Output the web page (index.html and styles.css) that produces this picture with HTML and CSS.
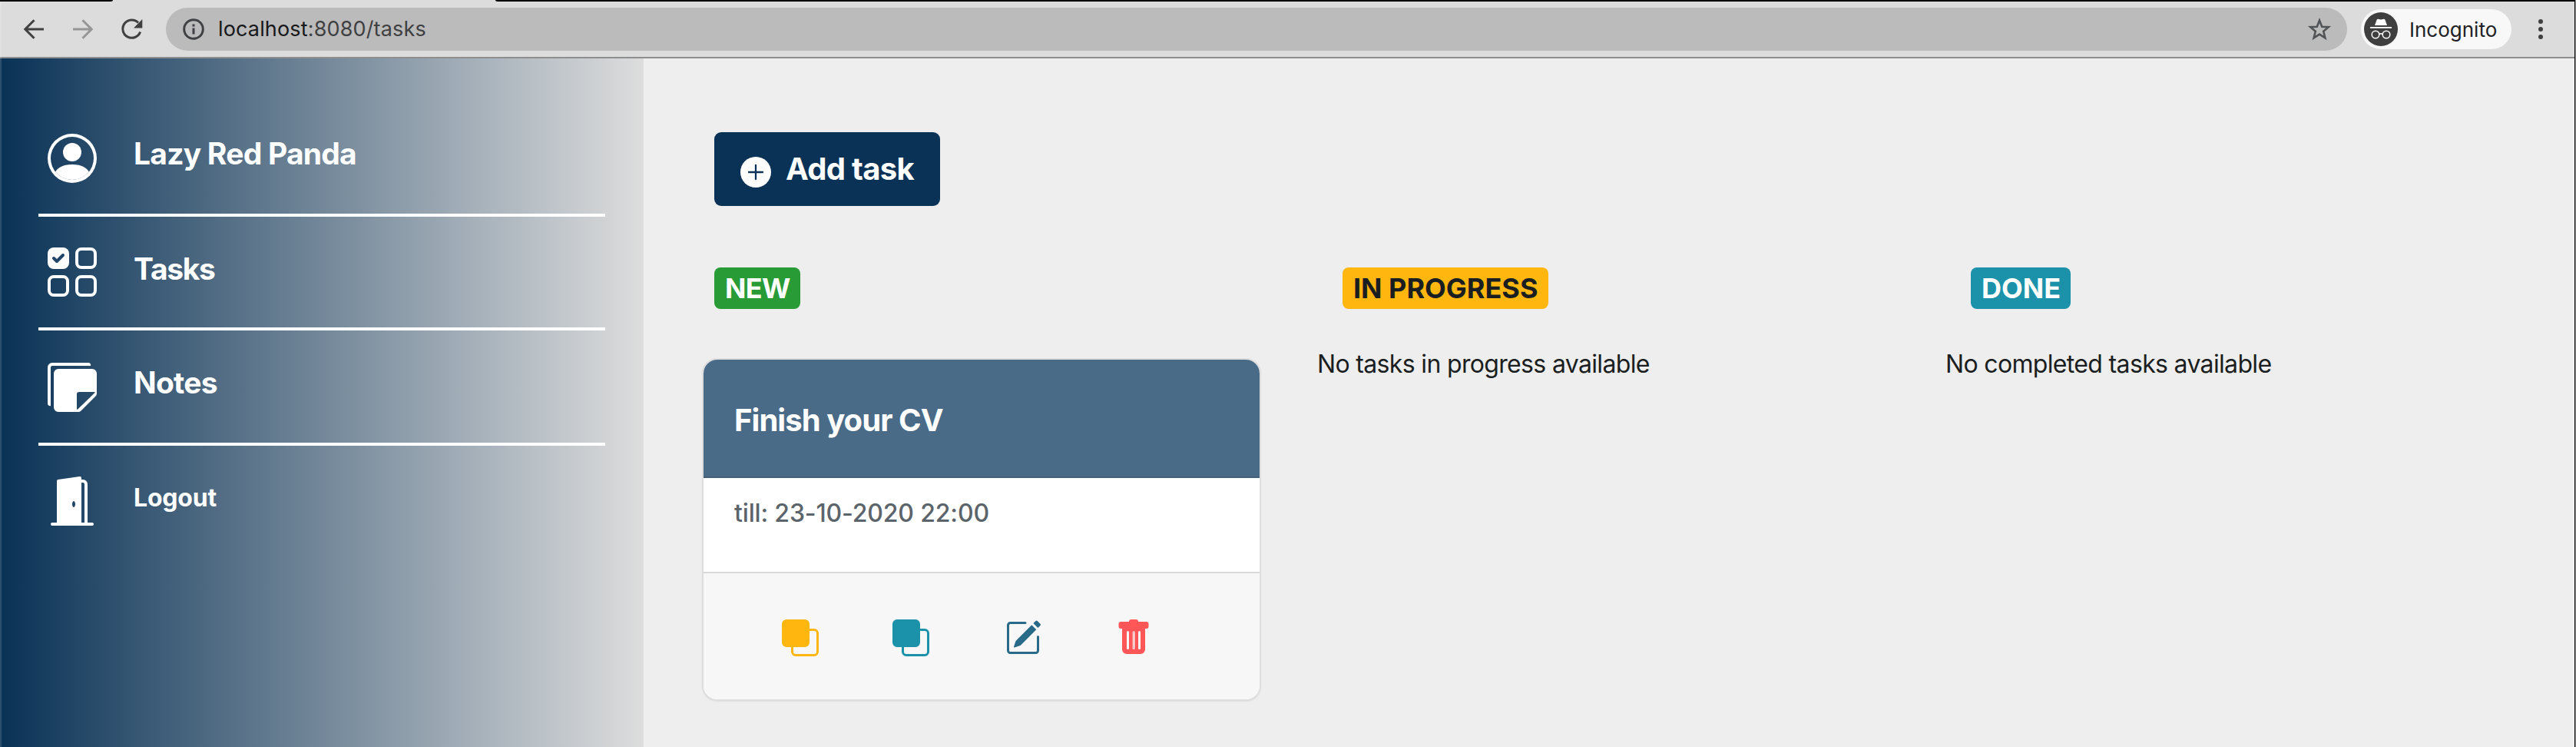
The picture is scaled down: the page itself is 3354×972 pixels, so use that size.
FILE: index.html
```html
<!DOCTYPE html>
<html lang="en">
<head>
<meta charset="utf-8">
<title>Tasks</title>
<link rel="stylesheet" href="styles.css">
</head>
<body>
<header class="toolbar">
  <div class="tabstrip"><span class="tab-left"></span><span class="tab-right"></span></div>
  <div class="toolbar-row">
    <svg class="nav-icon back" viewBox="0 0 28 28"><path d="M27 14H3M14.5 2.2L2.8 14l11.7 11.8"/></svg>
    <svg class="nav-icon forward" viewBox="0 0 28 28"><path d="M1 14h24M13.5 2.2L25.200 14 13.500 25.800"/></svg>
    <svg class="nav-icon reload" viewBox="0 0 28 28"><path d="M24.600 17.500A11.700 11.700 0 1 1 22 5.500"/><path class="solid" d="M27.300 1v11.500H16z"/></svg>
    <div class="omnibox">
      <svg class="info" viewBox="0 0 28 28"><circle cx="14" cy="14" r="12.300"/><path d="M14 12.500v8M14 7.500v3"/></svg>
      <span class="url"><span class="host">localhost</span>:8080/tasks</span>
      <svg class="star" viewBox="0 0 30 30"><path d="M15 3.500l3.200 8.200 8.600.5-6.600 5.500 2.200 8.600L15 21.600l-7.400 4.700 2.200-8.600-6.600-5.500 8.600-.5z"/></svg>
    </div>
    <div class="incognito">
      <svg class="spy" viewBox="0 0 44 44"><circle cx="22" cy="22" r="22" fill="#3f3f3f"/><g fill="#fff"><path d="M14 17l2.700-7.600q.5-1 1.600-.7l3.700.9 3.700-.9q1.100-.3 1.600.7L30 17z"/><path d="M8 19h28v1.800H8z"/></g><g fill="none" stroke="#fff" stroke-width="1.500"><circle cx="15" cy="29" r="4.800"/><circle cx="29" cy="29" r="4.800"/><path d="M19.800 28.500q2.200-1.400 4.400 0"/></g></svg>
      <span class="incognito-label">Incognito</span>
    </div>
    <svg class="menu-dots" viewBox="0 0 6 26"><circle cx="3" cy="3" r="3"/><circle cx="3" cy="13" r="3"/><circle cx="3" cy="23" r="3"/></svg>
  </div>
</header>
<div class="app">
  <nav class="sidebar">
    <a class="item profile"><svg class="icon" viewBox="0 0 16 16"><path d="M13.468 12.370C12.758 11.226 11.195 10 8 10s-4.757 1.225-5.468 2.370A6.987 6.987 0 0 0 8 15a6.987 6.987 0 0 0 5.468-2.630z"/><circle cx="8" cy="6" r="3"/><path fill-rule="evenodd" d="M8 1a7 7 0 1 0 0 14A7 7 0 0 0 8 1zM0 8a8 8 0 1 1 16 0A8 8 0 0 1 0 8z"/></svg><span class="label">Lazy Red Panda</span></a>
    <a class="item tasks"><svg class="icon" viewBox="0 0 64 64"><rect width="28" height="28" rx="8"/><g fill="none" stroke="#fff" stroke-width="4"><rect x="38" y="2" width="24" height="24" rx="6"/><rect x="2" y="38" width="24" height="24" rx="6"/><rect x="38" y="38" width="24" height="24" rx="6"/></g><path d="M8 14l4 4 8-8" fill="none" stroke="#20456a" stroke-width="4" stroke-linecap="round" stroke-linejoin="round"/></svg><span class="label">Tasks</span></a>
    <a class="item notes"><svg class="icon" viewBox="0 0 64 64"><path d="M0 53V6a6 6 0 0 1 6-6h47a3 3 0 0 1 3 4H6a2 2 0 0 0-2 2v50a3 3 0 0 1-4-3z"/><path fill-rule="evenodd" d="M14 8h44a6 6 0 0 1 6 6v26q0 2-1.500 3.500L43.500 62.500Q42 64 40 64H14a6 6 0 0 1-6-6V14a6 6 0 0 1 6-6zM41 38a3 3 0 0 0-3 3v18.500q0 2 1.500.7L61.500 39q.7-1-.5-1z"/></svg><span class="label">Notes</span></a>
    <a class="item logout"><svg class="icon" viewBox="0 0 16 16"><path fill-rule="evenodd" d="M1.500 15a.5.5 0 0 0 0 1h13a.5.5 0 0 0 0-1H13V2.500A1.500 1.500 0 0 0 11.500 1H11V.5a.5.5 0 0 0-.57-.495l-7 1A.5.5 0 0 0 3 1.500V15H1.500zM11 2v13h1V2.500a.5.5 0 0 0-.5-.5H11zm-2.500 8c-.276 0-.5-.448-.5-1s.224-1 .5-1 .5.448.5 1-.224 1-.5 1z"/></svg><span class="label">Logout</span></a>
  </nav>
  <main class="content">
    <button class="add-task"><svg class="plus" viewBox="0 0 40 40"><circle cx="20" cy="20" r="20" fill="#fff"/><path d="M20 11v18M11 20h18" stroke="#093256" stroke-width="2.300" stroke-linecap="round"/></svg><span class="add-label">Add task</span></button>
    <div class="board">
      <section class="column">
        <h2 class="badge new">NEW</h2>
        <article class="card">
          <div class="card-header">Finish your CV</div>
          <div class="card-body">till: 23-10-2020 22:00</div>
          <div class="card-footer">
            <svg class="action amber" viewBox="0 0 16 16"><path fill-rule="evenodd" d="M0 2a2 2 0 0 1 2-2h8a2 2 0 0 1 2 2v2h2a2 2 0 0 1 2 2v8a2 2 0 0 1-2 2H6a2 2 0 0 1-2-2v-2H2a2 2 0 0 1-2-2V2zm12 3v5a2 2 0 0 1-2 2H5v2a1 1 0 0 0 1 1h8a1 1 0 0 0 1-1V6a1 1 0 0 0-1-1h-2z"/></svg>
            <svg class="action teal" viewBox="0 0 16 16"><path fill-rule="evenodd" d="M0 2a2 2 0 0 1 2-2h8a2 2 0 0 1 2 2v2h2a2 2 0 0 1 2 2v8a2 2 0 0 1-2 2H6a2 2 0 0 1-2-2v-2H2a2 2 0 0 1-2-2V2zm12 3v5a2 2 0 0 1-2 2H5v2a1 1 0 0 0 1 1h8a1 1 0 0 0 1-1V6a1 1 0 0 0-1-1h-2z"/></svg>
            <svg class="action edit" viewBox="0 0 16 16"><path d="M15.502 1.940a.5.5 0 0 1 0 .706L14.459 3.690l-2-2L13.502.646a.5.5 0 0 1 .707 0l1.293 1.293zm-1.750 2.456l-2-2L4.939 9.210a.5.5 0 0 0-.121.196l-.805 2.414a.25.25 0 0 0 .316.316l2.414-.805a.5.5 0 0 0 .196-.12l6.813-6.814z"/><path d="M1 13.500A1.500 1.500 0 0 0 2.500 15h11a1.500 1.500 0 0 0 1.500-1.500v-6a.5.5 0 0 0-1 0v6a.5.5 0 0 1-.5.5h-11a.5.5 0 0 1-.5-.5v-11a.5.5 0 0 1 .5-.5H9a.5.5 0 0 0 0-1H2.500A1.500 1.500 0 0 0 1 2.500v11z"/></svg>
            <svg class="action trash" viewBox="0 0 16 16"><path fill-rule="evenodd" d="M2.500 1a1 1 0 0 0-1 1v1a1 1 0 0 0 1 1H3v9a2 2 0 0 0 2 2h6a2 2 0 0 0 2-2V4h.5a1 1 0 0 0 1-1V2a1 1 0 0 0-1-1H10a1 1 0 0 0-1-1H7a1 1 0 0 0-1 1H2.500zm3 4a.5.5 0 0 1 .5.5v7a.5.5 0 0 1-1 0v-7a.5.5 0 0 1 .5-.5zM8 5a.5.5 0 0 1 .5.5v7a.5.5 0 0 1-1 0v-7A.5.5 0 0 1 8 5zm3 .5a.5.5 0 0 0-1 0v7a.5.5 0 0 0 1 0v-7z"/><path opacity=".45" d="M7.500 5h.5v8h-.5z"/></svg>
          </div>
        </article>
      </section>
      <section class="column">
        <h2 class="badge progress">IN PROGRESS</h2>
        <p class="empty">No tasks in progress available</p>
      </section>
      <section class="column">
        <h2 class="badge done">DONE</h2>
        <p class="empty">No completed tasks available</p>
      </section>
    </div>
  </main>
</div>
<div class="edge-left"></div>
<div class="edge-right"></div>
</body>
</html>
```
FILE: styles.css
```css
* { box-sizing: border-box; }
html { height: 972px; overflow: hidden; }
body { margin: 0; width: 3354px; height: 972px; overflow: hidden; position: relative; display: flex; flex-direction: column; background: #eee; font-family: Inter, "Liberation Sans", sans-serif; color: #1b1e21; }
svg { display: block; flex: none; overflow: visible; }

/* Browser toolbar */
.toolbar { height: 76px; flex: none; background: #dcdcdc; border-bottom: 2px solid #8e8e8e; display: flex; flex-direction: column; }
.tabstrip { height: 2px; display: flex; justify-content: space-between; }
.tab-left { width: 147px; background: #000; border-bottom-right-radius: 4px 2px; }
.tab-right { width: 2709px; background: #000; border-bottom-left-radius: 4px 2px; }
.toolbar-row { height: 72px; display: flex; align-items: center; padding-left: 30px; }
.nav-icon { width: 28px; height: 28px; fill: none; stroke: #404040; stroke-width: 3; }
.forward { margin-left: 36px; stroke: #969696; }
.reload { margin-left: 36px; }
.reload .solid { fill: #404040; stroke: none; }
.omnibox { margin-left: 30px; width: 2840px; height: 56px; border-radius: 28px; background: #bbb; display: flex; align-items: center; padding: 0 20px 0 22px; }
.info { width: 28px; height: 28px; fill: none; stroke: #404144; stroke-width: 3; }
.url { margin-left: 18px; flex: 1; font-size: 27px; line-height: 40px; letter-spacing: .15px; color: #3f4042; }
.host { color: #17181a; }
.star { width: 30px; height: 30px; fill: none; stroke: #505356; stroke-width: 2.6; margin-right: 1px; }
.incognito { margin-left: 18px; width: 196px; height: 52px; border-radius: 26px; background: #f8f8f8; display: flex; align-items: center; padding-left: 4px; }
.spy { width: 44px; height: 44px; }
.incognito-label { margin-left: 15px; padding-top: 1px; font-size: 26px; line-height: 40px; color: #202124; }
.menu-dots { margin-left: 35px; width: 6px; height: 26px; fill: #404040; }

/* Sidebar */
.app { flex: 1; display: flex; }
.sidebar { width: 838px; background: linear-gradient(90deg, #093256, #ddd); padding: 58px 50px 0; }
.item { display: flex; align-items: flex-start; height: 148px; padding: 40px 0 0 12px; border-bottom: 4px solid #fff; color: #fff; font-weight: 700; font-size: 39px; line-height: 48px; letter-spacing: -.78px; }
.notes { height: 150px; padding-top: 42px; }
.logout { border-bottom: 0; font-size: 32px; letter-spacing: -.2px; }
.icon { width: 64px; height: 64px; fill: #fff; }
.label { margin-left: 48px; padding-top: 2px; }
.tasks .label { padding-top: 4px; letter-spacing: -1.3px; }
.logout .label { padding-top: 4px; }

/* Task board */
.content { flex: 1; padding: 96px 0 0 92px; display: flex; flex-direction: column; align-items: flex-start; }
.add-task { width: 294px; height: 96px; border: 0; border-radius: 9px; background: #093256; color: #fff; font: 700 40px/48px Inter, sans-serif; letter-spacing: -.7px; display: flex; align-items: center; padding: 0 0 0 34px; }
.plus { width: 40px; height: 40px; margin-top: 8px; }
.add-label { margin-left: 19px; margin-top: -1px; white-space: nowrap; }
.board { display: grid; grid-template-columns: 818px 818px 700px; margin-top: 80px; }
.column { display: flex; flex-direction: column; align-items: flex-start; }
.badge { margin: 0; height: 54px; border-radius: 8px; padding: 0 0 0 14px; font-size: 36px; line-height: 54px; font-weight: 700; color: #fff; white-space: nowrap; }
.new { width: 112px; background: #289b36; letter-spacing: -.7px; }
.progress { width: 268px; background: #ffb60f; color: #1b1e21; }
.done { width: 130px; background: #1c92aa; }
.empty { margin: 48px 0 0 -33px; font-size: 32px; line-height: 48px; letter-spacing: -.66px; white-space: nowrap; }

.card { margin: 64px 0 0 -16px; width: 728px; height: 446px; border: 2px solid #dedede; border-radius: 20px; background: #fff; overflow: hidden; display: flex; flex-direction: column; box-shadow: 0 1px 2px rgba(0, 0, 0, .06); }
.card-header { height: 154px; background: #4a6b87; border-bottom: 2px solid #436079; padding: 55px 40px 0; color: #fff; font-size: 40px; line-height: 48px; font-weight: 700; letter-spacing: -.95px; }
.card-body { height: 122px; padding: 22px 40px 0; font-size: 32px; line-height: 48px; font-weight: 500; letter-spacing: -.16px; color: #5b636b; }
.card-footer { flex: 1; border-top: 2px solid #d9d9d9; background: #f7f7f7; display: flex; gap: 96px; padding: 60px 0 0 102px; }
.action { width: 48px; height: 48px; }
.amber { fill: #ffb60f; }
.teal { fill: #1c92aa; }
.edit { fill: #296a88; margin-left: 2px; }
.trash { fill: #ff5757; }

/* Window frame */
.edge-left { position: absolute; left: 0; top: 2px; width: 2px; height: 970px; background: rgba(255, 255, 255, .15); }
.edge-right { position: absolute; right: 0; top: 0; width: 2px; height: 972px; background: #999; border-left: 1px solid #000; }
```
